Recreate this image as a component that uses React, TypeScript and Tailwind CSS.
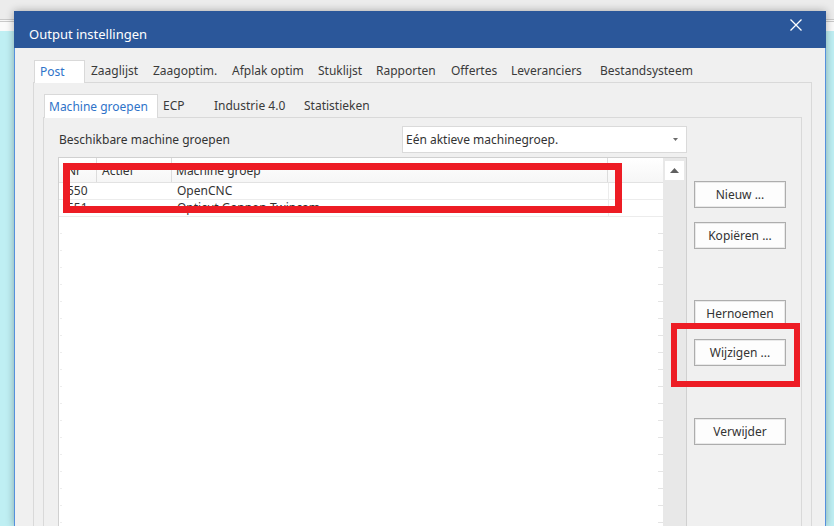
import React from 'react';

const outerTabs = [
  { label: 'Zaaglijst', w: 'w-[62px]' },
  { label: 'Zaagoptim.', w: 'w-[79px]' },
  { label: 'Afplak optim', w: 'w-[86px]' },
  { label: 'Stuklijst', w: 'w-[58px]' },
  { label: 'Rapporten', w: 'w-[75px]' },
  { label: 'Offertes', w: 'w-[60px]' },
  { label: 'Leveranciers', w: 'w-[89px]' },
  { label: 'Bestandsysteem', w: 'w-[100px]' },
];

const innerTabs = [
  { label: 'ECP', w: 'w-[51px]' },
  { label: 'Industrie 4.0', w: 'w-[90px]' },
  { label: 'Statistieken', w: 'w-[81px]' },
];

const rows = [
  { nr: '550', actief: '', naam: 'OpenCNC' },
  { nr: '551', actief: '', naam: 'Opticut Gannon Twincam' },
];

function DlgButton({ label, className }: { label: string; className: string }) {
  return (
    <button
      className={`w-[92px] h-[27px] bg-[#fdfdfd] border border-[#adadad] shadow-[inset_0_0_0_1px_#e9e9e9] text-[12px] text-[#333] leading-none ${className}`}
    >
      {label}
    </button>
  );
}

export default function App() {
  return (
    <div className="relative w-[834px] h-[526px] overflow-hidden bg-[#bfeff3] font-['Noto_Sans',sans-serif] text-[12px] text-[#333]">
      {/* desktop behind the dialog */}
      <div className="flex flex-col">
        <div className="h-[19px] bg-[#ececec]" />
        <div className="h-px bg-[#c9c9c9]" />
        <div className="h-px bg-[#f7f7f7]" />
        <div className="h-px bg-[#c9c9c9]" />
        <div className="h-[9px] bg-[#fafafa]" />
      </div>

      {/* Dialog window */}
      <div className="absolute left-[14px] top-[11px] w-[812px] h-[515px] flex flex-col bg-[#f0f0f0] border-x border-[#5590dc] shadow-[0_0_8px_rgba(0,0,0,0.3)]">
        {/* Title bar */}
        <div className="-mx-px h-[37px] shrink-0 bg-[#2b579a] flex items-start justify-between pl-[15px] pr-[24px]">
          <span className="mt-[14px] text-[13px] leading-[18px] text-white">Output instellingen</span>
          <svg className="mt-[8px]" width="12" height="12" viewBox="0 0 12 12">
            <path d="M0.5 0.5 L11.5 11.5 M11.5 0.5 L0.5 11.5" stroke="#fff" strokeWidth="1.3" fill="none" />
          </svg>
        </div>

        {/* Outer tab control */}
        <div className="flex-1 flex flex-col pl-[18px] pr-[13px] pt-[12px]">
          <div className="flex h-[22px] shrink-0">
            <div className="relative z-10 ml-px w-[51px] h-[23px] -mb-px bg-white border border-b-0 border-[#d9d9d9] pl-[5px] leading-[22px] text-[#2f73c9]">
              Post
            </div>
            {outerTabs.map((t) => (
              <div key={t.label} className={`${t.w} h-[22px] pl-[6px] leading-[22px] whitespace-nowrap text-[#3a3a3a]`}>
                {t.label}
              </div>
            ))}
          </div>

          <div className="flex-1 flex flex-col border border-b-0 border-[#d9d9d9] pl-[9px] pr-[9px] pt-[11px]">
            {/* Inner tab control */}
            <div className="flex h-[23px] shrink-0">
              <div className="relative z-10 ml-px w-[114px] h-[24px] -mb-px bg-white border border-b-0 border-[#d9d9d9] pl-[4px] leading-[23px] text-[#2f73c9] whitespace-nowrap">
                Machine groepen
              </div>
              {innerTabs.map((t) => (
                <div key={t.label} className={`${t.w} h-[23px] pl-[5px] leading-[23px] whitespace-nowrap text-[#3a3a3a]`}>
                  {t.label}
                </div>
              ))}
            </div>

            <div className="flex-1 flex flex-col border border-b-0 border-[#d9d9d9] pt-[8px]">
              {/* label + dropdown */}
              <div className="flex items-center pl-[15px]">
                <div className="w-[343px] whitespace-nowrap">Beschikbare machine groepen</div>
                <div className="w-[285px] h-[27px] flex items-center justify-between bg-white border border-[#dadada] pl-[3px] pr-[8px]">
                  <span>Eén aktieve machinegroep.</span>
                  <svg width="5" height="3" viewBox="0 0 5 3">
                    <path d="M0 0 L5 0 L2.5 3 Z" fill="#6b6b6b" />
                  </svg>
                </div>
              </div>

              <div className="flex-1 flex mt-[4px]">
                {/* grid */}
                <div className="ml-[14px] w-[629px] flex border border-b-0 border-[#d0d0d0]">
                  <div className="flex-1 flex flex-col bg-white">
                    <div className="h-[25px] flex border-b border-[#e2e2e2] bg-gradient-to-b from-white to-[#f6f6f6]">
                      <div className="w-[38px] border-r border-[#dcdcdc] pl-[8px] pt-[4px]">Nr</div>
                      <div className="w-[75px] border-r border-[#dcdcdc] pl-[5px] pt-[4px]">Actief</div>
                      <div className="w-[436px] border-r border-[#dcdcdc] pl-[4px] pt-[4px]">Machine groep</div>
                      <div className="flex-1" />
                    </div>
                    {rows.map((r) => (
                      <div key={r.nr} className="h-[17px] flex border-b border-[#ececec] leading-[16px]">
                        <div className="w-[38px] pl-[8px]">{r.nr}</div>
                        <div className="w-[75px] pl-[5px]">{r.actief}</div>
                        <div className="w-[436px] pl-[5px] whitespace-nowrap">{r.naam}</div>
                        <div className="flex-1 border-l border-[#ececec]" />
                      </div>
                    ))}
                    {Array.from({ length: 18 }).map((_, i) => (
                      <div key={i} className="h-[17px] flex justify-between items-end">
                        <span className="ml-px w-[2px] h-px bg-[#ededed]" />
                        <span className="w-[5px] h-px bg-[#e4e4e4]" />
                      </div>
                    ))}
                  </div>
                  {/* vertical scrollbar */}
                  <div className="w-[23px] bg-[#e8e8e8] flex flex-col items-center pt-[3px]">
                    <div className="w-[19px] h-[19px] bg-white flex items-center justify-center">
                      <svg width="9" height="5" viewBox="0 0 9 5">
                        <path d="M0 5 L4.5 0 L9 5 Z" fill="#606060" />
                      </svg>
                    </div>
                  </div>
                </div>

                {/* buttons */}
                <div className="ml-[7px] flex flex-col">
                  <DlgButton label="Nieuw ..." className="mt-[24px]" />
                  <DlgButton label="Kopiëren ..." className="mt-[14px]" />
                  <DlgButton label="Hernoemen" className="mt-[51px]" />
                  <DlgButton label="Wijzigen ..." className="mt-[12px]" />
                  <DlgButton label="Verwijder" className="mt-[52px]" />
                </div>
              </div>
            </div>
          </div>
        </div>
      </div>

      {/* red annotation boxes */}
      <div className="absolute left-[63px] top-[163px] w-[559px] h-[50px] border-[7px] border-[#ed1c24]" />
      <div className="absolute left-[671px] top-[323px] w-[129px] h-[64px] border-[6px] border-[#ed1c24]" />
    </div>
  );
}
